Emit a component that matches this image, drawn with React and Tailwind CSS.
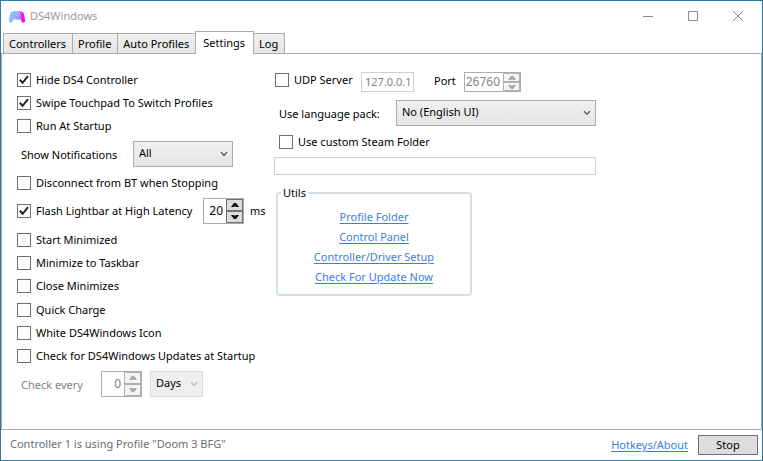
import React, { useId } from "react";

const TABS = ["Controllers", "Profile", "Auto Profiles", "Settings", "Log"];
const UTILS = ["Profile Folder", "Control Panel", "Controller/Driver Setup", "Check For Update Now"];

function Check({ label, checked = false }) {
  return (
    <label className="flex h-[23px] items-center gap-[5px] whitespace-nowrap">
      <span className="grid">
        <input
          type="checkbox"
          defaultChecked={checked}
          className="peer col-start-1 row-start-1 size-3.5 appearance-none border border-[#707070] bg-white"
        />
        <svg
          viewBox="0 0 14 14"
          className="pointer-events-none invisible col-start-1 row-start-1 size-3.5 peer-checked:visible"
          fill="none"
          stroke="#212121"
          strokeWidth="2"
        >
          <path d="M2.8 6.8 5.6 9.8 11 3.2" />
        </svg>
      </span>
      <span>{label}</span>
    </label>
  );
}

function Dropdown({ id, value, disabled = false, label, className }) {
  return (
    <span className={"grid h-[26px] " + className}>
      <select
        id={id}
        aria-label={label}
        disabled={disabled}
        defaultValue={value}
        className="col-start-1 row-start-1 appearance-none border border-[#acacac] bg-linear-to-b from-[#f0f0f0] to-[#e5e5e5] px-[5px] pb-0.5 text-black opacity-100 disabled:border-[#d9d9d9] disabled:from-[#efefef] disabled:to-[#efefef]"
      >
        <option>{value}</option>
      </select>
      <svg
        viewBox="0 0 8 6"
        className="pointer-events-none col-start-1 row-start-1 mr-[5px] h-1.5 w-2 self-center justify-self-end"
        fill="none"
        stroke={disabled ? "#bfbfbf" : "#606060"}
        strokeWidth="1.5"
      >
        <path d="M1 1.2 4 4.2 7 1.2" />
      </svg>
    </span>
  );
}

function SpinButton({ up, disabled, label }) {
  return (
    <button
      type="button"
      aria-label={label}
      disabled={disabled}
      className="flex flex-1 items-center justify-center border border-[#707070] bg-[#dddddd] disabled:border-[#adb2b5] disabled:bg-[#f4f4f4]"
    >
      <svg viewBox="0 0 8 4" className="h-1 w-2" fill={disabled ? "#a5a5a5" : "#000000"}>
        <path d={up ? "M0 4 3 0H5L8 4H5.6L4 3.2 2.4 4Z" : "M0 0 3 4H5L8 0H5.6L4 .8 2.4 0Z"} />
      </svg>
    </button>
  );
}

function Spinner({ id, label, value, disabled = false, className }) {
  return (
    <span className={"flex border border-[#abadb3] bg-white " + className}>
      <input
        id={id}
        aria-label={label}
        type="text"
        defaultValue={value}
        disabled={disabled}
        className="w-0 min-w-0 flex-1 pr-[3px] text-right text-[12px] disabled:text-[#838383]"
      />
      <span className="flex w-[17px] flex-col">
        <SpinButton up disabled={disabled} label={"Increase " + label} />
        <SpinButton disabled={disabled} label={"Decrease " + label} />
      </span>
    </span>
  );
}

function Link({ children }) {
  return (
    <a href="#" className="text-[#3d80d8] underline underline-offset-2">
      {children}
    </a>
  );
}

function TitleBar() {
  return (
    <header className="flex h-[30px] items-center pr-0.5 pl-2">
      <svg viewBox="0 0 16 13" className="h-[13px] w-4">
        <defs>
          <linearGradient id="pad" x1="0" x2="1" y1="0" y2="0">
            <stop offset="0" stopColor="#7cc8ff" />
            <stop offset="0.5" stopColor="#98a4ff" />
            <stop offset="0.72" stopColor="#c070fb" />
            <stop offset="0.82" stopColor="#f010ee" />
            <stop offset="1" stopColor="#ff00e6" />
          </linearGradient>
        </defs>
        <path
          fill="url(#pad)"
          d="M2 2 5 1.6 6 1H11L12 1.6 14 2C15 4 16 8 16 11.4 16 12.4 15 12.6 13 12.4L11.6 9.4H4.4L3 12.4C1 12.6 0 12.4 0 11.4 0 8 1 4 2 2Z"
        />
        <path
          fill="#ffffff"
          fillOpacity="0.5"
          d="M7 1H8V2H7ZM9 1H10V2H9ZM6 3H7V4H6ZM8 3H9V4H8ZM10 3H11V4H10ZM7 5H8V6H7ZM9 5H10V6H9ZM3 4H4V5H3Z"
        />
      </svg>
      <h1 className="flex-1 pl-[5px] text-[#999999]">DS4Windows</h1>
      <button type="button" aria-label="Minimize" className="flex h-full w-[45px] items-center justify-center">
        <svg viewBox="0 0 10 10" className="size-2.5" stroke="#8c8c8c">
          <path d="M0 5.5H10" />
        </svg>
      </button>
      <button type="button" aria-label="Maximize" className="flex h-full w-[45px] items-center justify-center">
        <svg viewBox="0 0 10 10" className="size-2.5" stroke="#8c8c8c" fill="none">
          <path d="M.5.5H9.5V9.5H.5Z" />
        </svg>
      </button>
      <button type="button" aria-label="Close" className="flex h-full w-[45px] items-center justify-center">
        <svg viewBox="0 0 10 10" className="size-2.5" stroke="#8c8c8c">
          <path d="M0 0 10 10M10 0 0 10" />
        </svg>
      </button>
    </header>
  );
}

function TabStrip() {
  return (
    <nav role="tablist" className="flex items-end pl-0.5">
      {TABS.map((tab) =>
        tab === "Settings" ? (
          <button
            key={tab}
            type="button"
            role="tab"
            aria-selected="true"
            className="relative -mb-px -ml-px h-[23px] border border-b-0 border-[#acacac] bg-white pr-2 pb-px pl-[7px]"
          >
            {tab}
          </button>
        ) : (
          <button
            key={tab}
            type="button"
            role="tab"
            aria-selected="false"
            className="-ml-px h-5 border border-b-0 border-[#acacac] bg-linear-to-b from-[#f0f0f0] to-[#e5e5e5] pr-1.5 pl-[5px] first:ml-0"
          >
            {tab}
          </button>
        )
      )}
    </nav>
  );
}

function GeneralSettings() {
  const notify = useId();
  const every = useId();
  return (
    <section className="flex w-[257px] flex-col gap-1">
      <div>
        <Check label="Hide DS4 Controller" checked />
        <Check label="Swipe Touchpad To Switch Profiles" checked />
        <Check label="Run At Startup" />
      </div>
      <div className="flex items-center pl-1">
        <label htmlFor={notify} className="w-28 pt-0.5">
          Show Notifications
        </label>
        <Dropdown id={notify} value="All" className="w-[100px]" />
      </div>
      <Check label="Disconnect from BT when Stopping" />
      <div className="flex items-center">
        <span className="w-[186px]">
          <Check label="Flash Lightbar at High Latency" checked />
        </span>
        <Spinner label="latency threshold" value="20" className="h-[26px] w-[41px]" />
        <span className="pl-1.5">ms</span>
      </div>
      <div>
        <Check label="Start Minimized" />
        <Check label="Minimize to Taskbar" />
        <Check label="Close Minimizes" />
        <div className="pt-px">
          <Check label="Quick Charge" />
          <Check label="White DS4Windows Icon" />
          <Check label="Check for DS4Windows Updates at Startup" />
        </div>
      </div>
      <div className="flex items-center pl-1">
        <label htmlFor={every} className="w-20 pt-0.5 text-[#838383]">
          Check every
        </label>
        <Spinner id={every} label="update interval" value="0" disabled className="h-[26px] w-[41px]" />
        <Dropdown label="Interval unit" value="Days" disabled className="ml-2 w-[53px]" />
      </div>
    </section>
  );
}

function ServerSettings() {
  const port = useId();
  const language = useId();
  return (
    <section className="flex w-[322px] flex-col">
      <div className="flex items-center pl-px">
        <span className="w-[86px]">
          <Check label="UDP Server" />
        </span>
        <input
          type="text"
          aria-label="UDP server address"
          defaultValue="127.0.0.1"
          disabled
          className="mt-1 h-5 w-[53px] border border-[#cdcfd3] bg-white pb-0.5 pl-[3px] text-[#838383]"
        />
        <label htmlFor={port} className="w-[50px] pt-0.5 pl-5">
          Port
        </label>
        <Spinner id={port} label="port" value="26760" disabled className="mt-1 h-5 w-[57px]" />
      </div>
      <div className="mt-2 flex items-center pl-[5px]">
        <label htmlFor={language} className="flex-1 pt-0.5">
          Use language pack:
        </label>
        <Dropdown id={language} value="No (English UI)" className="w-[200px]" />
      </div>
      <div className="mt-1 pl-[5px]">
        <Check label="Use custom Steam Folder" />
      </div>
      <input
        type="text"
        aria-label="Custom Steam folder"
        disabled
        className="mt-1 h-[18px] border border-[#cdcfd3] bg-white"
      />
      <fieldset className="mt-2.5 ml-0.5 flex w-[196px] flex-col rounded border-2 border-[#d5dfe5] pb-[7px]">
        <legend className="ml-[3px] px-0.5 leading-4">Utils</legend>
        <ul className="pt-1.5 text-center leading-5">
          {UTILS.map((name) => (
            <li key={name}>
              <Link>{name}</Link>
            </li>
          ))}
        </ul>
      </fieldset>
    </section>
  );
}

export default function App() {
  return (
    <div className="flex min-h-screen flex-col border border-[#2a7aa8] bg-white font-['Noto_Sans','Open_Sans',sans-serif] text-[11px] leading-4 text-black">
      <TitleBar />
      <TabStrip />
      <main className="flex flex-1 border border-[#acacac] pt-3.5 pl-[15px]">
        <GeneralSettings />
        <ServerSettings />
      </main>
      <footer className="flex h-[30px] items-center pr-1 pl-[9px]">
        <p className="flex-1 pb-0.5 text-[#6d6d6d]">Controller 1 is using Profile "Doom 3 BFG"</p>
        <Link>Hotkeys/About</Link>
        <button type="button" className="ml-2.5 h-5 w-[60px] border border-[#707070] bg-[#dddddd] leading-4">
          Stop
        </button>
      </footer>
    </div>
  );
}
